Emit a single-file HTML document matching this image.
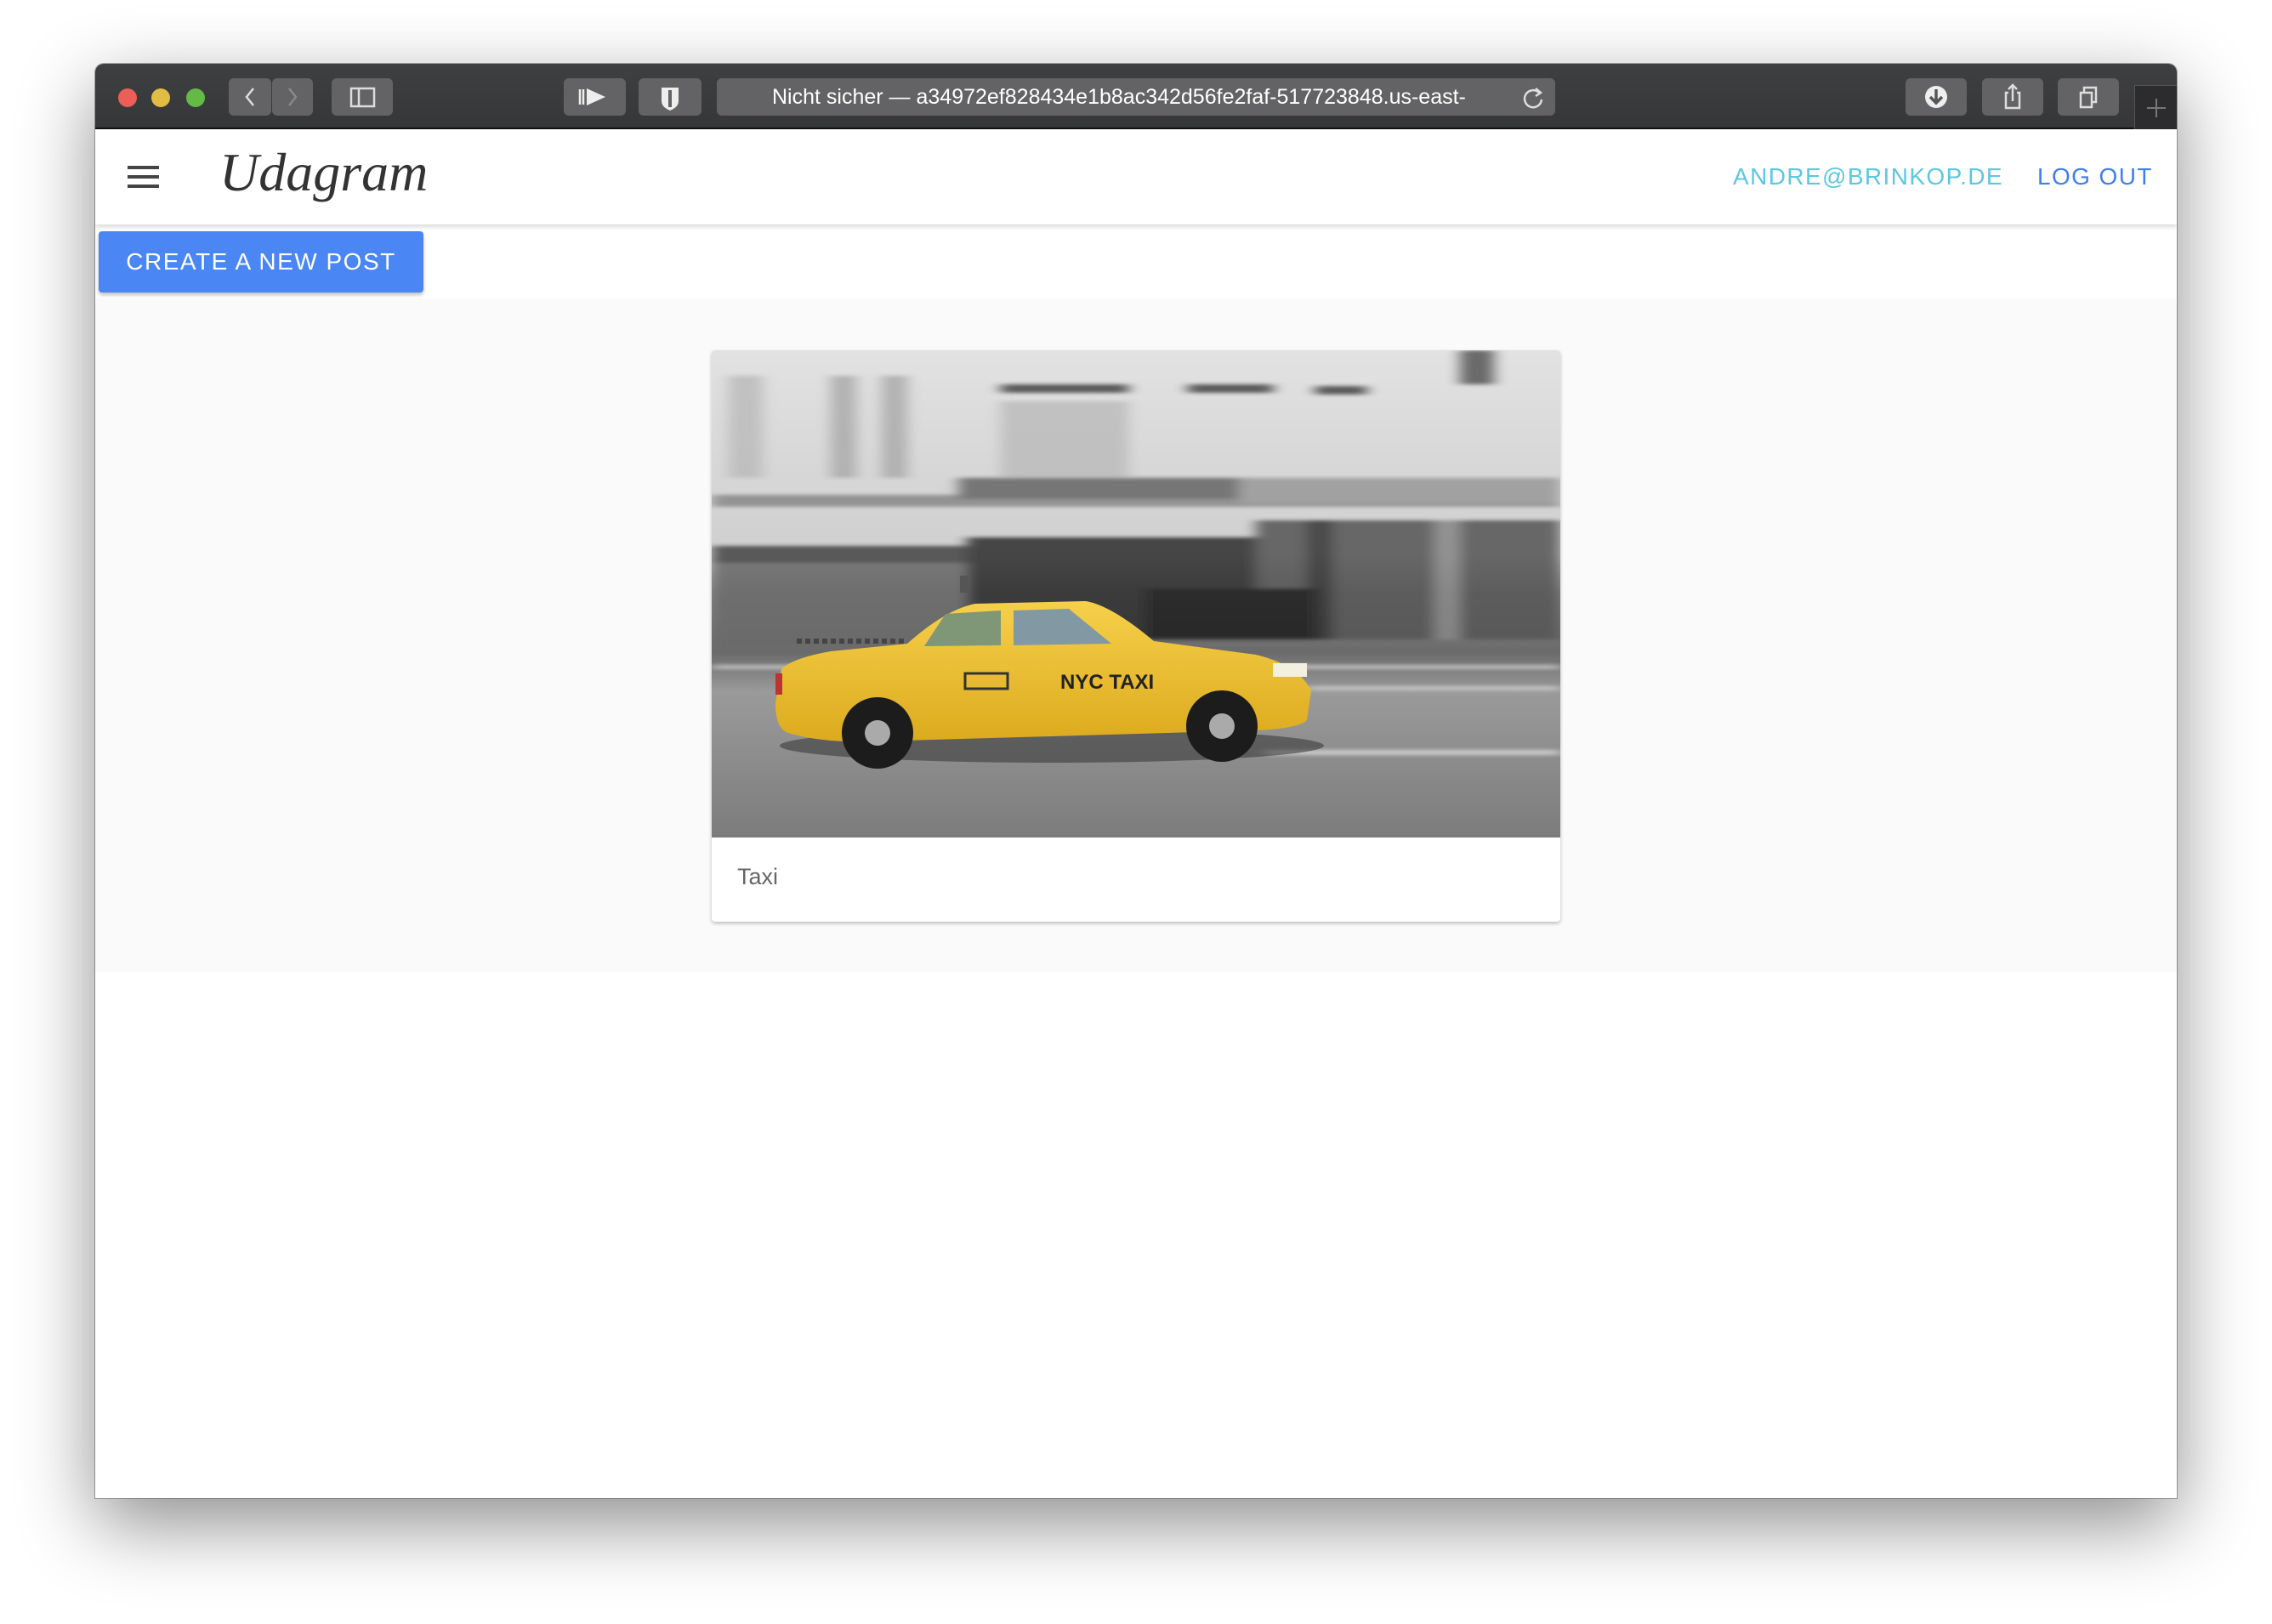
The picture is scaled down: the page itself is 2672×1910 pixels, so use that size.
<!DOCTYPE html>
<html><head><meta charset="utf-8"><style>
*{margin:0;padding:0;box-sizing:border-box}
body{width:2672px;height:1910px;background:#fff;position:relative;overflow:hidden;font-family:"Liberation Sans",sans-serif}
.win{position:absolute;left:112px;top:75px;width:2448px;height:1687px;background:#fff;border-radius:10px 10px 0 0;box-shadow:0 30px 90px rgba(0,0,0,.45),0 0 0 1px rgba(0,0,0,.3);overflow:hidden}
.tb{position:absolute;left:0;top:0;width:100%;height:77px;background:linear-gradient(#3e3f41,#363739);border-bottom:2px solid #111}
.dot{position:absolute;top:29px;width:22px;height:22px;border-radius:50%}
.bt{position:absolute;top:17px;height:44px;background:#636365;border-radius:6px}
.nav{position:absolute;left:0;top:77px;width:100%;height:112px;background:#fff;box-shadow:0 3px 5px rgba(0,0,0,.15);z-index:2}
.grey{position:absolute;left:0;top:276px;width:100%;height:792px;background:#fafafa}
.btn{position:absolute;left:4px;top:197px;width:382px;height:72px;background:#4a86f4;border-radius:4px;box-shadow:0 3px 4px rgba(0,0,0,.25);color:#fff;font-size:28px;letter-spacing:1.5px;line-height:72px;text-align:center;z-index:3}
.card{position:absolute;left:725px;top:337px;width:998px;height:672px;background:#fff;border-radius:4px;box-shadow:0 2px 4px rgba(0,0,0,.25);overflow:hidden}
</style></head><body>
<div class="win">
 <div class="tb">
  <div class="dot" style="left:27px;background:#ec5f57"></div>
  <div class="dot" style="left:66px;background:#e2bd43"></div>
  <div class="dot" style="left:107px;background:#63ba45"></div>
  <div class="bt" style="left:157px;width:50px"><svg width="50" height="44"><path d="M29 12 L21 22 L29 32" stroke="#ddd" stroke-width="2.5" fill="none"/></svg></div>
  <div class="bt" style="left:208px;width:48px"><svg width="48" height="44"><path d="M20 12 L28 22 L20 32" stroke="#888" stroke-width="2.5" fill="none"/></svg></div>
  <div class="bt" style="left:278px;width:72px"><svg width="72" height="44"><rect x="23" y="12" width="27" height="21" stroke="#ddd" stroke-width="2.5" fill="none"/><path d="M32 12V33" stroke="#ddd" stroke-width="2.5"/></svg></div>
  <div class="bt" style="left:551px;width:73px"><svg width="73" height="44"><path d="M19 13V31M23 13V31" stroke="#eee" stroke-width="2.5"/><path d="M27 12L49 22L27 32Z" fill="#eee"/></svg></div>
  <div class="bt" style="left:639px;width:74px"><svg width="74" height="44"><path d="M27 11H47V27Q47 34 37 38Q27 34 27 27Z" fill="#eee"/><path d="M37 14V34" stroke="#636365" stroke-width="4"/></svg></div>
  <div class="bt" style="left:731px;width:986px;color:#fff;font-size:25px;line-height:44px;padding-left:65px;white-space:nowrap;overflow:hidden">Nicht sicher — a34972ef828434e1b8ac342d56fe2faf-517723848.us-east-<svg style="position:absolute;right:10px;top:8px" width="30" height="30"><path d="M21 9A10 10 0 1 0 24 17" stroke="#ddd" stroke-width="2.5" fill="none"/><path d="M17 4L23 9L17 13" stroke="#ddd" stroke-width="2.5" fill="none"/></svg></div>
  <div class="bt" style="left:2129px;width:72px"><svg width="72" height="44"><circle cx="36" cy="22" r="13" fill="#eee"/><path d="M36 13V29M29 22L36 29L43 22" stroke="#555" stroke-width="3.5" fill="none"/></svg></div>
  <div class="bt" style="left:2219px;width:72px"><svg width="72" height="44"><path d="M31 17H28V35H44V17H41" stroke="#ddd" stroke-width="2.5" fill="none"/><path d="M36 8V27M31 13L36 8L41 13" stroke="#ddd" stroke-width="2.5" fill="none"/></svg></div>
  <div class="bt" style="left:2308px;width:72px"><svg width="72" height="44"><rect x="27" y="17" width="13" height="17" stroke="#ddd" stroke-width="2.5" fill="none"/><path d="M31 17V11H45V28H40" stroke="#ddd" stroke-width="2.5" fill="none"/></svg></div>
  <div style="position:absolute;left:2398px;top:25px;width:52px;height:52px;background:#2c2c2e;border-left:1px solid #555;border-top:1px solid #555"><svg width="50" height="50"><path d="M25 15V37M14 26H36" stroke="#777" stroke-width="2"/></svg></div>
 </div>
 <div class="nav">
  <svg style="position:absolute;left:38px;top:42px" width="38" height="30"><path d="M0 3H37M0 14H37M0 25H37" stroke="#444" stroke-width="4"/></svg>
  <div style="position:absolute;left:146px;top:14px;font-family:'Liberation Serif',serif;font-style:italic;font-size:64px;color:#333">Udagram</div>
  <div style="position:absolute;left:1926px;top:40px;font-size:28px;letter-spacing:1.4px;color:#5ac8e0">ANDRE@BRINKOP.DE</div>
  <div style="position:absolute;left:2284px;top:40px;font-size:28px;letter-spacing:1.4px;color:#3f7ef0">LOG OUT</div>
 </div>
 <div class="btn">CREATE A NEW POST</div>
 <div class="grey"></div>
 <div class="card">
  <svg width="998" height="573" viewBox="0 0 998 573" style="display:block">
   <defs>
    <linearGradient id="bg" x1="0" y1="0" x2="0" y2="1">
     <stop offset="0" stop-color="#e2e2e2"/><stop offset=".42" stop-color="#cfcfcf"/><stop offset=".5" stop-color="#8a8a8a"/><stop offset=".62" stop-color="#6a6a6a"/><stop offset=".7" stop-color="#9a9a9a"/><stop offset="1" stop-color="#7c7c7c"/>
    </linearGradient>
    <linearGradient id="yl" x1="0" y1="0" x2="0" y2="1"><stop offset="0" stop-color="#f6d04a"/><stop offset="1" stop-color="#dcaa1e"/></linearGradient>
    <filter id="bl"><feGaussianBlur stdDeviation="8 2"/></filter>
   </defs>
   <rect width="998" height="573" fill="url(#bg)"/>
   <g filter="url(#bl)" opacity=".85">
    <rect x="20" y="30" width="40" height="120" fill="#bbb"/>
    <rect x="140" y="30" width="30" height="120" fill="#aaa"/>
    <rect x="200" y="30" width="30" height="120" fill="#aaa"/>
    <rect x="340" y="40" width="150" height="10" fill="#444"/>
    <rect x="560" y="40" width="100" height="10" fill="#444"/>
    <rect x="710" y="42" width="60" height="10" fill="#444"/>
    <rect x="340" y="60" width="150" height="90" fill="#bcbcbc"/>
    <rect x="880" y="0" width="40" height="40" fill="#555"/>
    <rect x="0" y="170" width="998" height="14" fill="#888"/>
    <rect x="290" y="150" width="330" height="25" fill="#666"/>
    <rect x="620" y="150" width="378" height="30" fill="#999"/>
    <rect x="0" y="230" width="300" height="20" fill="#444"/>
    <rect x="300" y="220" width="340" height="120" fill="#2e2e2e"/>
    <rect x="640" y="200" width="358" height="140" fill="#555"/>
    <rect x="700" y="200" width="30" height="140" fill="#333"/>
    <rect x="850" y="200" width="30" height="140" fill="#888"/>
    <rect x="0" y="250" width="300" height="100" fill="#6a6a6a"/>
    <rect x="510" y="280" width="200" height="60" fill="#1e1e1e"/>
    <rect x="0" y="370" width="998" height="5" fill="#c8c8c8"/>
    <rect x="700" y="395" width="298" height="5" fill="#ccc"/>
    <rect x="650" y="470" width="348" height="6" fill="#d4d4d4"/>
   </g>
   <g transform="translate(70,250)">
    <ellipse cx="330" cy="215" rx="320" ry="20" fill="#333" opacity=".55"/>
    <path d="M5 165 L12 125 Q25 112 70 104 L160 95 Q205 55 240 48 L370 45 Q400 50 450 92 L570 108 Q620 120 635 150 L630 185 Q620 195 570 197 L120 210 Q60 212 20 200 Q5 195 5 165Z" fill="url(#yl)"/>
    <path d="M180 98 L205 60 L270 56 L270 97Z" fill="#7f9776"/>
    <path d="M285 97 L285 56 L350 54 L400 95Z" fill="#8298a3"/>
    <rect x="222" y="15" width="10" height="20" fill="#555"/>
    <path d="M30 92 H160" stroke="#444" stroke-width="6" stroke-dasharray="6 4"/>
    <circle cx="125" cy="200" r="42" fill="#1c1c1c"/><circle cx="125" cy="200" r="15" fill="#aaa"/>
    <circle cx="530" cy="192" r="42" fill="#1c1c1c"/><circle cx="530" cy="192" r="15" fill="#aaa"/>
    <text x="340" y="148" font-family="Liberation Sans" font-weight="bold" font-size="24" fill="#222">NYC TAXI</text>
    <rect x="228" y="130" width="50" height="18" fill="none" stroke="#333" stroke-width="3"/>
    <rect x="590" y="118" width="40" height="16" fill="#f4f0e0"/>
    <rect x="5" y="130" width="8" height="25" fill="#b33"/>
   </g>
  </svg>
  <div style="position:absolute;left:30px;top:604px;font-size:27px;color:#666">Taxi</div>
 </div>
</div>
</body></html>
